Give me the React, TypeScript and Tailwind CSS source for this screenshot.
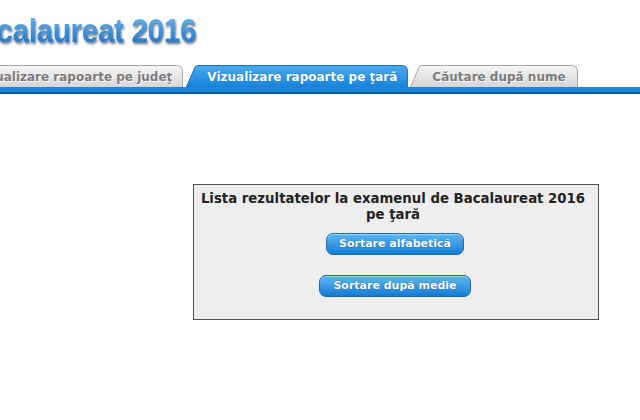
import React from "react";

function Slant({ active }: { active: boolean }) {
  const id = active ? "gBlue" : "gGray";
  return (
    <svg width="12" height="22" viewBox="0 0 12 22" className="block shrink-0">
      <defs>
        <linearGradient id={id} x1="0" y1="0" x2="0" y2="1">
          {active ? (
            <>
              <stop offset="0" stopColor="#4aaaf0" />
              <stop offset="1" stopColor="#1583dc" />
            </>
          ) : (
            <>
              <stop offset="0" stopColor="#f6f6f6" />
              <stop offset="1" stopColor="#d6d6d6" />
            </>
          )}
        </linearGradient>
      </defs>
      <path d="M0 22 L9 2 Q10 0.5 12 0.5 L12 22 Z" fill={`url(#${id})`} />
      <path
        d="M0.5 22 L9 2 Q10 0.5 12 0.5"
        fill="none"
        stroke={active ? "#1a78c8" : "#a9a9a9"}
        strokeWidth="1"
      />
    </svg>
  );
}

function Tab({
  label,
  active,
  pl,
  pr,
}: {
  label: string;
  active: boolean;
  pl: string;
  pr: string;
}) {
  return (
    <div className="flex shrink-0 items-end">
      <Slant active={active} />
      <div
        className={
          active
            ? `flex h-[22px] items-center whitespace-nowrap rounded-tr-[6px] border-t border-r border-[#1a78c8] bg-gradient-to-b from-[#4aaaf0] to-[#1583dc] ${pl} ${pr} text-[12px] font-bold text-white [text-shadow:0_0_1px_rgba(0,60,140,0.6)]`
            : `flex h-[22px] items-center whitespace-nowrap rounded-tr-[6px] border-t border-r border-[#a9a9a9] bg-gradient-to-b from-[#f6f6f6] to-[#d6d6d6] ${pl} ${pr} text-[12px] font-bold text-[#7c7c7c] [text-shadow:1px_1px_0_rgba(255,255,255,0.8)]`
        }
      >
        {label}
      </div>
    </div>
  );
}

export default function App() {
  return (
    <div
      className="relative h-[420px] w-[640px] overflow-hidden bg-white"
      style={{ fontFamily: '"DejaVu Sans", Verdana, sans-serif' }}
    >
      <div
        className="ml-[-41px] mt-[14px] origin-top scale-y-[1.08] whitespace-nowrap bg-gradient-to-b from-[#6fb6ec] via-[#3d92da] to-[#1f6cbc] bg-clip-text text-[30px] font-bold leading-[32px] tracking-[-0.5px] text-transparent drop-shadow-[1px_2px_1px_rgba(10,30,70,0.6)]"
        style={{ fontFamily: '"Liberation Sans", Arial, sans-serif', width: "max-content" }}
      >
        Bacalaureat 2016
      </div>

      <div className="mt-[19px] ml-[-47px] flex items-end">
        <Tab label="Vizualizare rapoarte pe judeţ" active={false} pl="pl-[10px]" pr="pr-[10px]" />
        <div className="w-[3px] shrink-0" />
        <Tab label="Vizualizare rapoarte pe ţară" active={true} pl="pl-[9px]" pr="pr-[10px]" />
        <div className="w-[2px] shrink-0" />
        <Tab label="Căutare după nume" active={false} pl="pl-[10px]" pr="pr-[11px]" />
      </div>
      <div className="h-[5px] w-full bg-[#1d86d6]" />
      <div className="h-[2px] w-full bg-[#0c58a8]" />

      <div className="ml-[193px] mt-[90px] h-[136px] w-[406px] border border-[#555555] bg-[#eeeeee] pl-[5px] pr-[11px] pt-[6px] text-center">
        <div className="text-[13.3px] font-bold leading-[16px] text-[#222222]">
          Lista rezultatelor la examenul de Bacalaureat 2016 pe ţară
        </div>
        <div className="mt-[10px] flex flex-col items-center gap-[20px] pl-[4px]">
          <button className="h-[22px] rounded-[7px] border border-[#1b6cb4] bg-gradient-to-b from-[#5cb8f2] to-[#0f7bd4] px-3 text-[11px] font-bold text-white shadow-[inset_0_1px_0_rgba(255,255,255,0.4)] [text-shadow:0_0_1px_rgba(0,50,120,0.7)]">
            Sortare alfabetică
          </button>
          <button className="h-[22px] rounded-[7px] border border-[#1b6cb4] bg-gradient-to-b from-[#5cb8f2] to-[#0f7bd4] px-[13px] text-[11px] font-bold text-white shadow-[inset_0_1px_0_rgba(255,255,255,0.4)] [text-shadow:0_0_1px_rgba(0,50,120,0.7)]">
            Sortare după medie
          </button>
        </div>
      </div>
    </div>
  );
}
